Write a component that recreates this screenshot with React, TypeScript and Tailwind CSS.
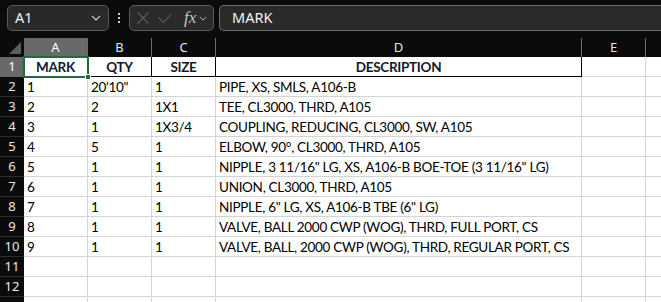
import { Fragment } from 'react';

const cols = ['A', 'B', 'C', 'D', 'E', ''];

const rows: string[][] = [
  ['MARK', 'QTY', 'SIZE', 'DESCRIPTION'],
  ['1', '20\'10"', '1', 'PIPE, XS, SMLS, A106-B'],
  ['2', '2', '1X1', 'TEE, CL3000, THRD, A105'],
  ['3', '1', '1X3/4', 'COUPLING, REDUCING, CL3000, SW, A105'],
  ['4', '5', '1', 'ELBOW, 90°, CL3000, THRD, A105'],
  ['5', '1', '1', 'NIPPLE, 3 11/16" LG, XS, A106-B BOE-TOE (3 11/16" LG)'],
  ['6', '1', '1', 'UNION, CL3000, THRD, A105'],
  ['7', '1', '1', 'NIPPLE, 6" LG, XS, A106-B TBE (6" LG)'],
  ['8', '1', '1', 'VALVE, BALL 2000 CWP (WOG), THRD, FULL PORT, CS'],
  ['9', '1', '1', 'VALVE, BALL, 2000 CWP (WOG), THRD, REGULAR PORT, CS'],
  [],
  [],
  [],
];

const uiFont = "font-['Noto_Sans',sans-serif]";
const cellFont = "font-['Lato',sans-serif]";

// チェブロン
const Chevron = ({ className }: { className: string }) => (
  <svg viewBox="0 0 10 6" className={className} fill="none" stroke="currentColor" strokeWidth="1.2">
    <path d="M1 1l4 4 4-4" />
  </svg>
);

// 数式バー
const FormulaBar = () => (
  <div className={`flex items-start h-[38px] pt-[5px] pl-[7px] ${uiFont}`}>
    <div className="flex items-center justify-between w-[102px] h-[26px] pl-[7px] pr-[7px] bg-[#292929] border border-[#5b5b5b] rounded-[5px]">
      <span className="text-[14.5px] text-[#f2f2f2]">A1</span>
      <Chevron className="w-[10px] h-[6px] text-[#c8c8c8]" />
    </div>
    <div className="flex flex-col items-center justify-center gap-[2px] w-[20px] h-[26px]">
      <span className="block w-[2px] h-[2px] bg-[#d0d0d0]" />
      <span className="block w-[2px] h-[2px] bg-[#d0d0d0]" />
      <span className="block w-[2px] h-[2px] bg-[#d0d0d0]" />
    </div>
    <div className="flex items-center w-[85px] h-[26px] pl-[7px] bg-[#2a2a2a] border border-[#5b5b5b] rounded-[5px]">
      <svg viewBox="0 0 12 12" className="w-[12px] h-[12px] text-[#5f5f5f]" fill="none" stroke="currentColor" strokeWidth="1.1">
        <path d="M0.5 0.5l11 11M11.5 0.5l-11 11" />
      </svg>
      <svg viewBox="0 0 14 10" className="ml-[9px] w-[14px] h-[10px] text-[#5f5f5f]" fill="none" stroke="currentColor" strokeWidth="1.1">
        <path d="M0.5 4.5l5 5 8-9" />
      </svg>
      <span className="ml-[12px] font-['Liberation_Serif',serif] italic text-[17px] leading-none text-[#c4c4c4] -mt-[2px]">fx</span>
      <Chevron className="ml-[3px] w-[8px] h-[5px] text-[#b8b8b8]" />
    </div>
    <div className="flex items-center flex-1 h-[26px] ml-[5px] pl-[12px] bg-[#2a2a2a] border-y border-l border-[#6b6b6b] rounded-l-[5px]">
      <span className="text-[14.5px] text-[#f2f2f2]">MARK</span>
    </div>
  </div>
);

const cellBorder = (r: number, c: number) => {
  if (r === 0 && c < 4) return 'border-r border-b border-black';
  return 'border-r border-b border-[#d4d4d4]';
};

const Sheet = () => (
  <div className="relative grid grid-cols-[24px_64px_64px_64px_366px_64px_64px]">
    {/* 左上コーナー */}
    <div className="h-[19px] flex items-end justify-end pr-[3px] pb-[3px]">
      <svg viewBox="0 0 12 12" className="w-[12px] h-[12px]">
        <path d="M12 0V12H0Z" fill="#5c5c5c" />
      </svg>
    </div>
    {cols.map((c, i) => (
      <div
        key={i}
        className={`h-[19px] flex items-center justify-center text-[13px] ${uiFont} ${
          i === 0 ? 'bg-[#696969] text-white' : 'text-[#dfe6ef]'
        } ${i < 5 ? 'border-r border-[#6e6e6e]' : ''}`}
      >
        {c}
      </div>
    ))}
    {rows.map((row, r) => (
      <Fragment key={r}>
        <div
          className={`h-[20px] flex items-center justify-center text-[13px] border-b ${uiFont} ${
            r === 0 ? 'bg-[#696969] text-white border-[#696969]' : 'text-[#e8e8e8] border-[#2c2c2c]'
          }`}
        >
          {r < 12 ? r + 1 : ''}
        </div>
        {cols.map((_, c) => {
          const v = row[c] ?? '';
          const head = r === 0;
          return (
            <div
              key={c}
              className={`h-[20px] bg-white flex items-center overflow-visible whitespace-nowrap text-[13.5px] tracking-[-0.3px] pt-[2px] ${cellFont} ${cellBorder(
                r,
                c
              )} ${head ? 'justify-center font-bold text-[#14182a]' : 'pl-[3px] text-black'}`}
            >
              {v}
            </div>
          );
        })}
      </Fragment>
    ))}
    {/* 選択セル A1 */}
    <div className="absolute left-[23px] top-[18px] w-[66px] h-[22px] border-2 border-[#1e6b3d]" />
    <div className="absolute left-[85px] top-[36px] w-[6px] h-[6px] bg-[#1e6b3d] border border-white" />
  </div>
);

export default function App() {
  return (
    <div className="w-[661px] h-[302px] overflow-hidden bg-[#0b0b0b]">
      <FormulaBar />
      <Sheet />
    </div>
  );
}
